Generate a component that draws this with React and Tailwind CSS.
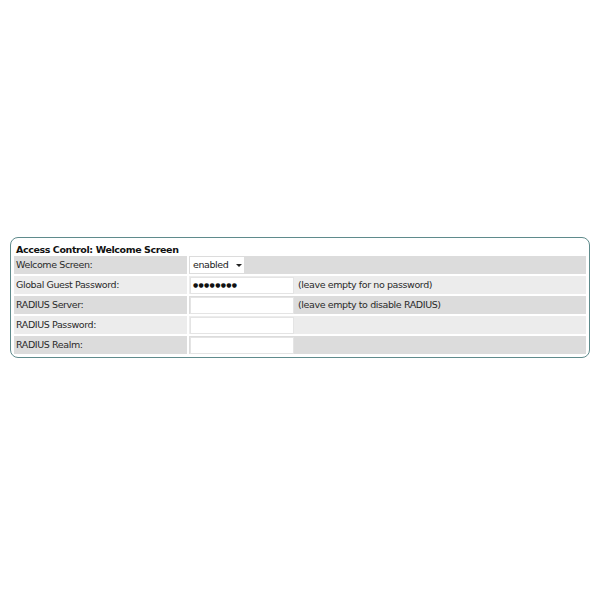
import React from 'react';

const rows = [
  { label: 'Welcome Screen:', kind: 'select', shade: 'bg-[#dcdcdc]' },
  { label: 'Global Guest Password:', kind: 'password', hint: '(leave empty for no password)', shade: 'bg-[#ececec]' },
  { label: 'RADIUS Server:', kind: 'text', hint: '(leave empty to disable RADIUS)', shade: 'bg-[#dcdcdc]' },
  { label: 'RADIUS Password:', kind: 'text', shade: 'bg-[#ececec]' },
  { label: 'RADIUS Realm:', kind: 'text', shade: 'bg-[#dcdcdc]' },
];

const Field = ({ kind }) => {
  if (kind === 'select') {
    return (
      <div className="ml-px h-[16px] w-[54px] bg-white flex items-center pl-[3px] text-[#222]">
        <span>enabled</span>
        <svg width="6" height="3" viewBox="0 0 6 3" className="ml-[8px]">
          <path d="M0 0 L6 0 L3 3 Z" fill="#222" />
        </svg>
      </div>
    );
  }
  return (
    <div className="ml-px h-[17px] w-[104px] bg-white border border-[#e4e4e4] flex items-center pl-[2px]">
      {kind === 'password' && (
        <span className="text-[6px] tracking-[0.3px] text-[#111] leading-none">●●●●●●●●</span>
      )}
    </div>
  );
};

export default function App() {
  return (
    <div
      className="min-h-[600px] bg-white pt-[237px] px-[10px] text-[9.5px] tracking-[-0.4px]"
      style={{ fontFamily: '"DejaVu Sans", Verdana, sans-serif' }}
    >
      <div className="border border-[#5f8b8c] rounded-[8px] px-[3px] pt-[4px] pb-[3px]">
        <div className="h-[14px] pl-[2px] font-bold text-[#111] leading-[15px]">
          Access Control: Welcome Screen
        </div>
        <div className="flex flex-col gap-[2px]">
          {rows.map((r) => (
            <div key={r.label} className="flex gap-[2px] h-[18px]">
              <div className={`w-[173px] ${r.shade} pl-[2px] text-[#2a2a2a] flex items-center`}>
                {r.label}
              </div>
              <div className={`flex-1 ${r.shade} flex items-center`}>
                <Field kind={r.kind} />
                {r.hint && (
                  <span className="ml-[4px] text-[#2a2a2a]">{r.hint}</span>
                )}
              </div>
            </div>
          ))}
        </div>
      </div>
    </div>
  );
}
